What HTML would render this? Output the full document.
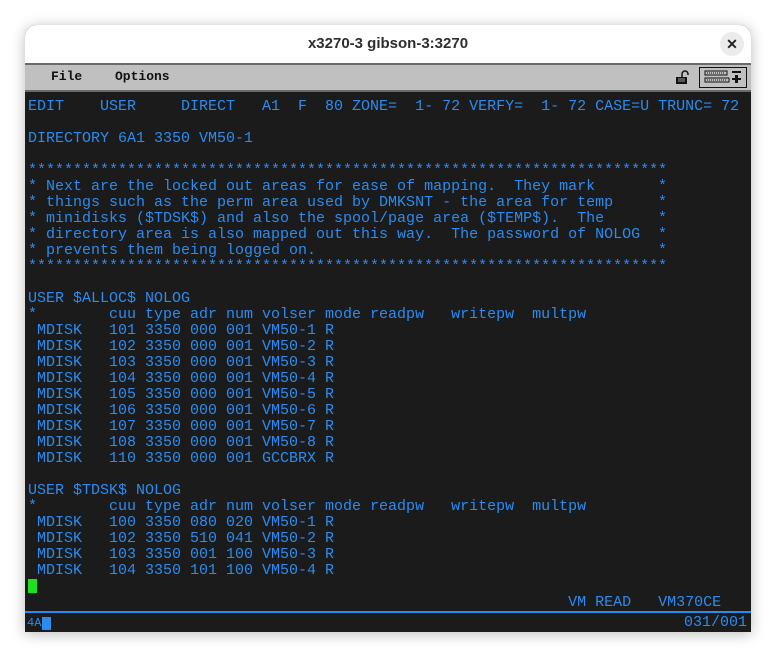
<!DOCTYPE html>
<html><head><meta charset="utf-8"><style>
html,body{margin:0;padding:0;background:#fff;width:776px;height:657px;overflow:hidden}
.win{position:absolute;left:25px;top:25px;width:726px;height:607px;border-radius:12px 12px 0 0;box-shadow:0 2px 14px rgba(0,0,0,.28);background:#1b1b1b;overflow:hidden}
.title{position:absolute;left:0;top:0;width:726px;height:38px;background:#fff;text-align:center;font:bold 15px "Liberation Sans",sans-serif;color:#2e2e2e;line-height:38px}
.close{position:absolute;right:7px;top:7px;width:24px;height:24px;border-radius:50%;background:#ebebeb;font:bold 14px "Liberation Sans",sans-serif;line-height:24px;text-align:center;color:#222}
.menu{position:absolute;left:0;top:38px;width:726px;height:29px;background:#c0c0c0;border-top:2px solid #6a6a6a;border-bottom:2px solid #6a6a6a;box-sizing:border-box}
.menu span{position:absolute;top:4px;font:bold 13px "Liberation Mono",monospace;color:#111}
.kb{position:absolute;right:4px;top:2px;width:48px;height:21px;border:1.5px solid #111;box-sizing:border-box}
.term{position:absolute;left:3px;top:74px;font:15px/16px "Liberation Mono",monospace;color:#2a8cf0;white-space:pre}
.row{position:relative;height:16px;width:720px}
.e{position:absolute;left:630px;top:0}
.cur{display:inline-block;width:9px;height:14px;background:#1ee01e;vertical-align:-2px}
.oline{position:absolute;left:0;top:586px;width:726px;height:2px;background:#2a8cf0}
.oia{position:absolute;left:0;top:589px;width:726px;height:18px;font:15px/18px "Liberation Mono",monospace;color:#2a8cf0}
</style></head><body>
<div class="win">
<div class="title">x3270-3 gibson-3:3270<div class="close">✕</div></div>
<div class="menu"><span style="left:26px">File</span><span style="left:90px">Options</span>
<svg style="position:absolute;left:650px;top:4px" width="18" height="16" viewBox="0 0 18 16"><path d="M7 8V5a3 3 0 0 1 6 0v1" fill="none" stroke="#111" stroke-width="1.5"/><rect x="1" y="8" width="11" height="7" fill="#111"/><path d="M3 10h7M3 12h7" stroke="#ccc" stroke-width="0.8"/></svg>
<div class="kb"><svg width="45" height="18" viewBox="0 0 45 18"><rect x="5" y="3" width="22" height="4" fill="none" stroke="#111" stroke-width="1"/><path d="M7 5h18" stroke="#111" stroke-dasharray="1 1"/><rect x="5" y="10" width="24" height="4" fill="none" stroke="#111" stroke-width="1"/><path d="M7 12h20" stroke="#111" stroke-dasharray="1 1"/><rect x="32" y="3" width="9" height="2" fill="#111"/><rect x="32" y="10" width="9" height="2" fill="#111"/><rect x="35" y="7" width="3" height="8" fill="#111"/></svg></div>
</div>
<div class="term"><div class="row">EDIT    USER     DIRECT   A1  F  80 ZONE=  1- 72 VERFY=  1- 72 CASE=U TRUNC= 72</div><div class="row"> </div><div class="row">DIRECTORY 6A1 3350 VM50-1</div><div class="row"> </div><div class="row">***********************************************************************</div><div class="row">* Next are the locked out areas for ease of mapping.  They mark<span class="e">*</span></div><div class="row">* things such as the perm area used by DMKSNT - the area for temp<span class="e">*</span></div><div class="row">* minidisks ($TDSK$) and also the spool/page area ($TEMP$).  The<span class="e">*</span></div><div class="row">* directory area is also mapped out this way.  The password of NOLOG<span class="e">*</span></div><div class="row">* prevents them being logged on.<span class="e">*</span></div><div class="row">***********************************************************************</div><div class="row"> </div><div class="row">USER $ALLOC$ NOLOG</div><div class="row">*        cuu type adr num volser mode readpw   writepw  multpw</div><div class="row"> MDISK   101 3350 000 001 VM50-1 R</div><div class="row"> MDISK   102 3350 000 001 VM50-2 R</div><div class="row"> MDISK   103 3350 000 001 VM50-3 R</div><div class="row"> MDISK   104 3350 000 001 VM50-4 R</div><div class="row"> MDISK   105 3350 000 001 VM50-5 R</div><div class="row"> MDISK   106 3350 000 001 VM50-6 R</div><div class="row"> MDISK   107 3350 000 001 VM50-7 R</div><div class="row"> MDISK   108 3350 000 001 VM50-8 R</div><div class="row"> MDISK   110 3350 000 001 GCCBRX R</div><div class="row"> </div><div class="row">USER $TDSK$ NOLOG</div><div class="row">*        cuu type adr num volser mode readpw   writepw  multpw</div><div class="row"> MDISK   100 3350 080 020 VM50-1 R</div><div class="row"> MDISK   102 3350 510 041 VM50-2 R</div><div class="row"> MDISK   103 3350 001 100 VM50-3 R</div><div class="row"> MDISK   104 3350 101 100 VM50-4 R</div><div class="row"><span class="cur"></span></div><div class="row">                                                            VM READ   VM370CE</div></div>
<div class="oline"></div>
<div class="oia"><span style="position:absolute;left:2px;top:0;font-size:12px">4A</span><span style="position:absolute;left:17px;top:3px;width:9px;height:13px;background:#2a8cf0"></span><span style="position:absolute;right:4px;top:0">031/001</span></div>
</div>
</body></html>
